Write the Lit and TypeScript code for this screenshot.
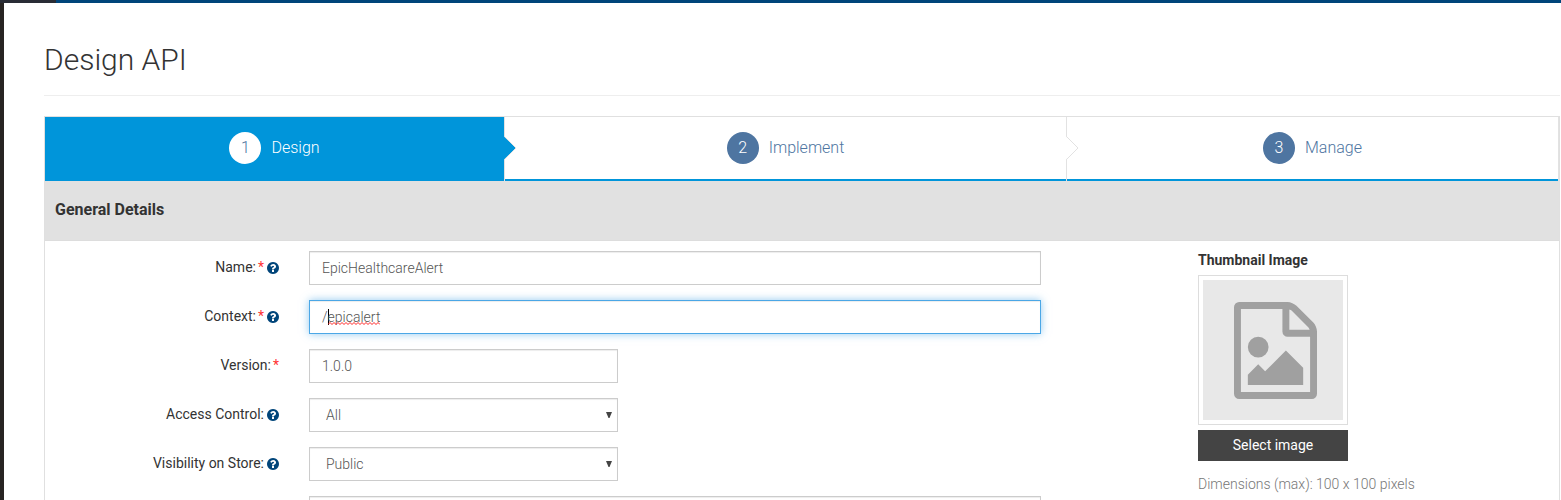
import { LitElement, html, css, nothing } from "lit";
import { customElement } from "lit/decorators.js";
import { classMap } from "lit/directives/class-map.js";

interface Step {
  label: string;
  size: string;
}

interface Field {
  label: string;
  required?: boolean;
  help?: boolean;
  kind: "text" | "focus" | "select";
  wide?: boolean;
  value: string;
}

const STEPS: Step[] = [
  { label: "Design", size: "first" },
  { label: "Implement", size: "second" },
  { label: "Manage", size: "third" },
];

const FIELDS: Field[] = [
  { label: "Name:", required: true, help: true, kind: "text", wide: true, value: "EpicHealthcareAlert" },
  { label: "Context:", required: true, help: true, kind: "focus", wide: true, value: "epicalert" },
  { label: "Version:", required: true, kind: "text", value: "1.0.0" },
  { label: "Access Control:", help: true, kind: "select", value: "All" },
  { label: "Visibility on Store:", help: true, kind: "select", value: "Public" },
  { label: "", kind: "text", wide: true, value: "" },
];

const WAVE = "M0 2.5" + Array.from({ length: 13 }, () => "l2 -2l2 2").join("");

@customElement("app-root")
export class AppRoot extends LitElement {
  static styles = css`
    :host {
      display: grid;
      grid-template-columns: 4px 1fr;
      grid-template-rows: 3px 1fr;
      height: 500px;
      overflow: hidden;
      background: #fff;
      color: #333;
      font: 400 14px/20px Roboto, sans-serif;
    }
    * { box-sizing: border-box; }
    .topbar {
      grid-column: 1 / 3;
      background: linear-gradient(90deg, #292c35 56px, #00457a 56px);
    }
    .rail { background: #272422; }
    .page { padding: 0 1px 0 40px; min-width: 0; min-height: 0; }
    h1 {
      margin: 0;
      padding: 40px 0 0;
      height: 93px;
      border-bottom: 1px solid #eee;
      font-weight: 300;
      font-size: 30px;
      line-height: 33px;
    }
    .panel {
      margin-top: 20px;
      height: 420px;
      border: 1px solid #e0e0e0;
      border-bottom: 0;
    }
    .steps { display: flex; height: 64px; }
    .step {
      position: relative;
      display: flex;
      align-items: center;
      justify-content: center;
      height: 64px;
      border-right: 1px solid #e2e2e2;
      font-weight: 300;
      font-size: 16px;
      color: #4e75a1;
    }
    .underline {
      background: linear-gradient(#0095da, #0095da) left bottom / 100% 2px no-repeat;
    }
    .first { width: 460px; background: #0095da; background-clip: padding-box; color: #fff; }
    .second { width: 562px; }
    .third { flex: 1; }
    .num {
      display: flex;
      align-items: center;
      justify-content: center;
      width: 32px;
      height: 32px;
      margin: -2px 10px 0 0;
      border-radius: 50%;
      background: #4e75a1;
      color: #fff;
    }
    .first .num { background: #fff; color: #4e75a1; }
    .name { margin-top: -3px; }
    .arrow { position: absolute; left: 100%; top: 18px; z-index: 1; display: block; }
    .heading {
      height: 60px;
      padding: 18px 10px 0;
      background: #e1e1e1;
      border-bottom: 1px solid #ddd;
      font-weight: 700;
      font-size: 16px;
      line-height: 22px;
    }
    .body { display: flex; padding-top: 10px; }
    .form { width: 996px; display: grid; row-gap: 15px; }
    .row { display: grid; grid-template-columns: 234px 732px; column-gap: 30px; height: 34px; }
    .label {
      display: flex;
      justify-content: flex-end;
      padding-top: 6px;
      white-space: pre;
    }
    .star { color: #f33; margin-left: 2px; }
    .help { width: 12px; height: 12px; margin: 5px 0 0 3px; fill: #00457a; }
    .control {
      display: flex;
      align-items: center;
      width: 309px;
      height: 34px;
      padding: 0 12px;
      border: 1px solid #ccc;
      box-shadow: inset 0 1px 1px rgba(0, 0, 0, 0.075);
      color: #555;
      font-weight: 300;
    }
    .wide { width: 732px; }
    .focus {
      border-color: #4ba7e6;
      box-shadow: inset 0 1px 1px rgba(0, 0, 0, 0.075), 0 0 8px rgba(75, 167, 230, 0.6);
    }
    .select { justify-content: space-between; padding: 0 5px 0 16px; }
    .tri { fill: #444; }
    .caret { width: 1px; height: 16px; background: #000; margin-right: -1px; }
    .misspelt { position: relative; }
    .wave { position: absolute; left: 0; bottom: 2px; fill: none; stroke: #f22; }
    .thumb { margin-left: 157px; width: 240px; }
    .title { font-weight: 700; line-height: 18px; }
    .frame {
      width: 150px;
      height: 150px;
      margin-top: 6px;
      padding: 4px;
      border: 1px solid #ddd;
    }
    .picture {
      height: 140px;
      padding: 22px 0 0 30.5px;
      background: #e8e8e8;
    }
    .picture svg { display: block; }
    .button {
      width: 150px;
      height: 31px;
      margin-top: 5px;
      background: #444;
      color: #fff;
      text-align: center;
      line-height: 30px;
    }
    .hint { margin-top: 13px; color: #777; font-weight: 300; }
  `;

  private renderStep(step: Step, i: number) {
    return html`<div class=${classMap({ step: true, [step.size]: true, underline: i > 0 })}>
      <span class="num">${i + 1}</span><span class="name">${step.label}</span>
      ${i < 2
        ? html`<svg class="arrow" width="14" height="26" viewBox="0 0 14 26">
            <path d="M0 1.500L12 13L0 24.500Z" fill=${i === 0 ? "#0095da" : "#fff"} />
            <path d="M0.500 1.500L12 13L0.500 24.500" fill="none" stroke="#e2e2e2" />
            ${i === 0 ? html`` : nothing}
          </svg>`
        : nothing}
    </div>`;
  }

  private renderField(f: Field) {
    return html`<div class="row">
      <div class="label"><span>${f.label}</span>${f.required ? html`<span class="star">*</span>` : nothing}${f.help
        ? html`<svg class="help" viewBox="128 128 1536 1536"><path d="M1024 1376v-192q0-14-9-23t-23-9h-192q-14 0-23 9t-9 23v192q0 14 9 23t23 9h192q14 0 23-9t9-23zm256-672q0-88-55.5-163t-138.5-116-170-41q-243 0-371 213-15 24 8 42l132 100q7 6 19 6 16 0 25-12 53-68 86-92 34-24 86-24 48 0 85.5 26t37.5 59q0 38-20 61t-68 45q-63 28-115.5 86.5t-52.5 125.5v36q0 14 9 23t23 9h192q14 0 23-9t9-23q0-19 21.5-49.500t54.500-49.500q32-18 49-28.500t46-35 44.500-48 28-60.500 12.500-81zm384 192q0 209-103 385.500t-279.500 279.500-385.500 103-385.500-103-279.500-279.500-103-385.500 103-385.500 279.500-279.500 385.500-103 385.500 103 279.500 279.500 103 385.500z"/></svg>`
        : nothing}</div>
      <div class=${classMap({ control: true, wide: !!f.wide, focus: f.kind === "focus", select: f.kind === "select" })}>
        ${f.kind === "focus"
          ? html`<span>/</span><span class="caret"></span><span class="misspelt">${f.value}<svg class="wave" width="52" height="3" viewBox="0 0 52 3"><path d=${WAVE} /></svg></span>`
          : html`<span>${f.value}</span>`}
        ${f.kind === "select"
          ? html`<svg class="tri" width="6" height="6" viewBox="0 0 6 6"><path d="M0 0H6L3.500 6H2.500Z" /></svg>`
          : nothing}
      </div>
    </div>`;
  }

  render() {
    return html`
      <div class="topbar"></div>
      <div class="rail"></div>
      <main class="page">
        <h1>Design API</h1>
        <section class="panel">
          <nav class="steps">${STEPS.map((s, i) => this.renderStep(s, i))}</nav>
          <div class="heading">General Details</div>
          <div class="body">
            <div class="form">${FIELDS.map((f) => this.renderField(f))}</div>
            <aside class="thumb">
              <div class="title">Thumbnail Image</div>
              <div class="frame">
                <div class="picture">
                  <svg width="83" height="97" viewBox="0 0 1536 1792" fill="#a0a0a0"><path d="M1468 380q28 28 48 76t20 88v1152q0 40-28 68t-68 28h-1344q-40 0-68-28t-28-68v-1600q0-40 28-68t68-28h896q40 0 88 20t76 48zm-444-244v376h376q-10-29-22-41l-313-313q-12-12-41-22zm384 1528v-1024h-416q-40 0-68-28t-28-68v-416h-768v1536h1280zm-128-448v320h-1024v-192l192-192 128 128 384-384zm-832-192q-80 0-136-56t-56-136 56-136 136-56 136 56 56 136-56 136-136 56z" /></svg>
                </div>
              </div>
              <div class="button">Select image</div>
              <div class="hint">Dimensions (max): 100 x 100 pixels</div>
            </aside>
          </div>
        </section>
      </main>
    `;
  }
}
